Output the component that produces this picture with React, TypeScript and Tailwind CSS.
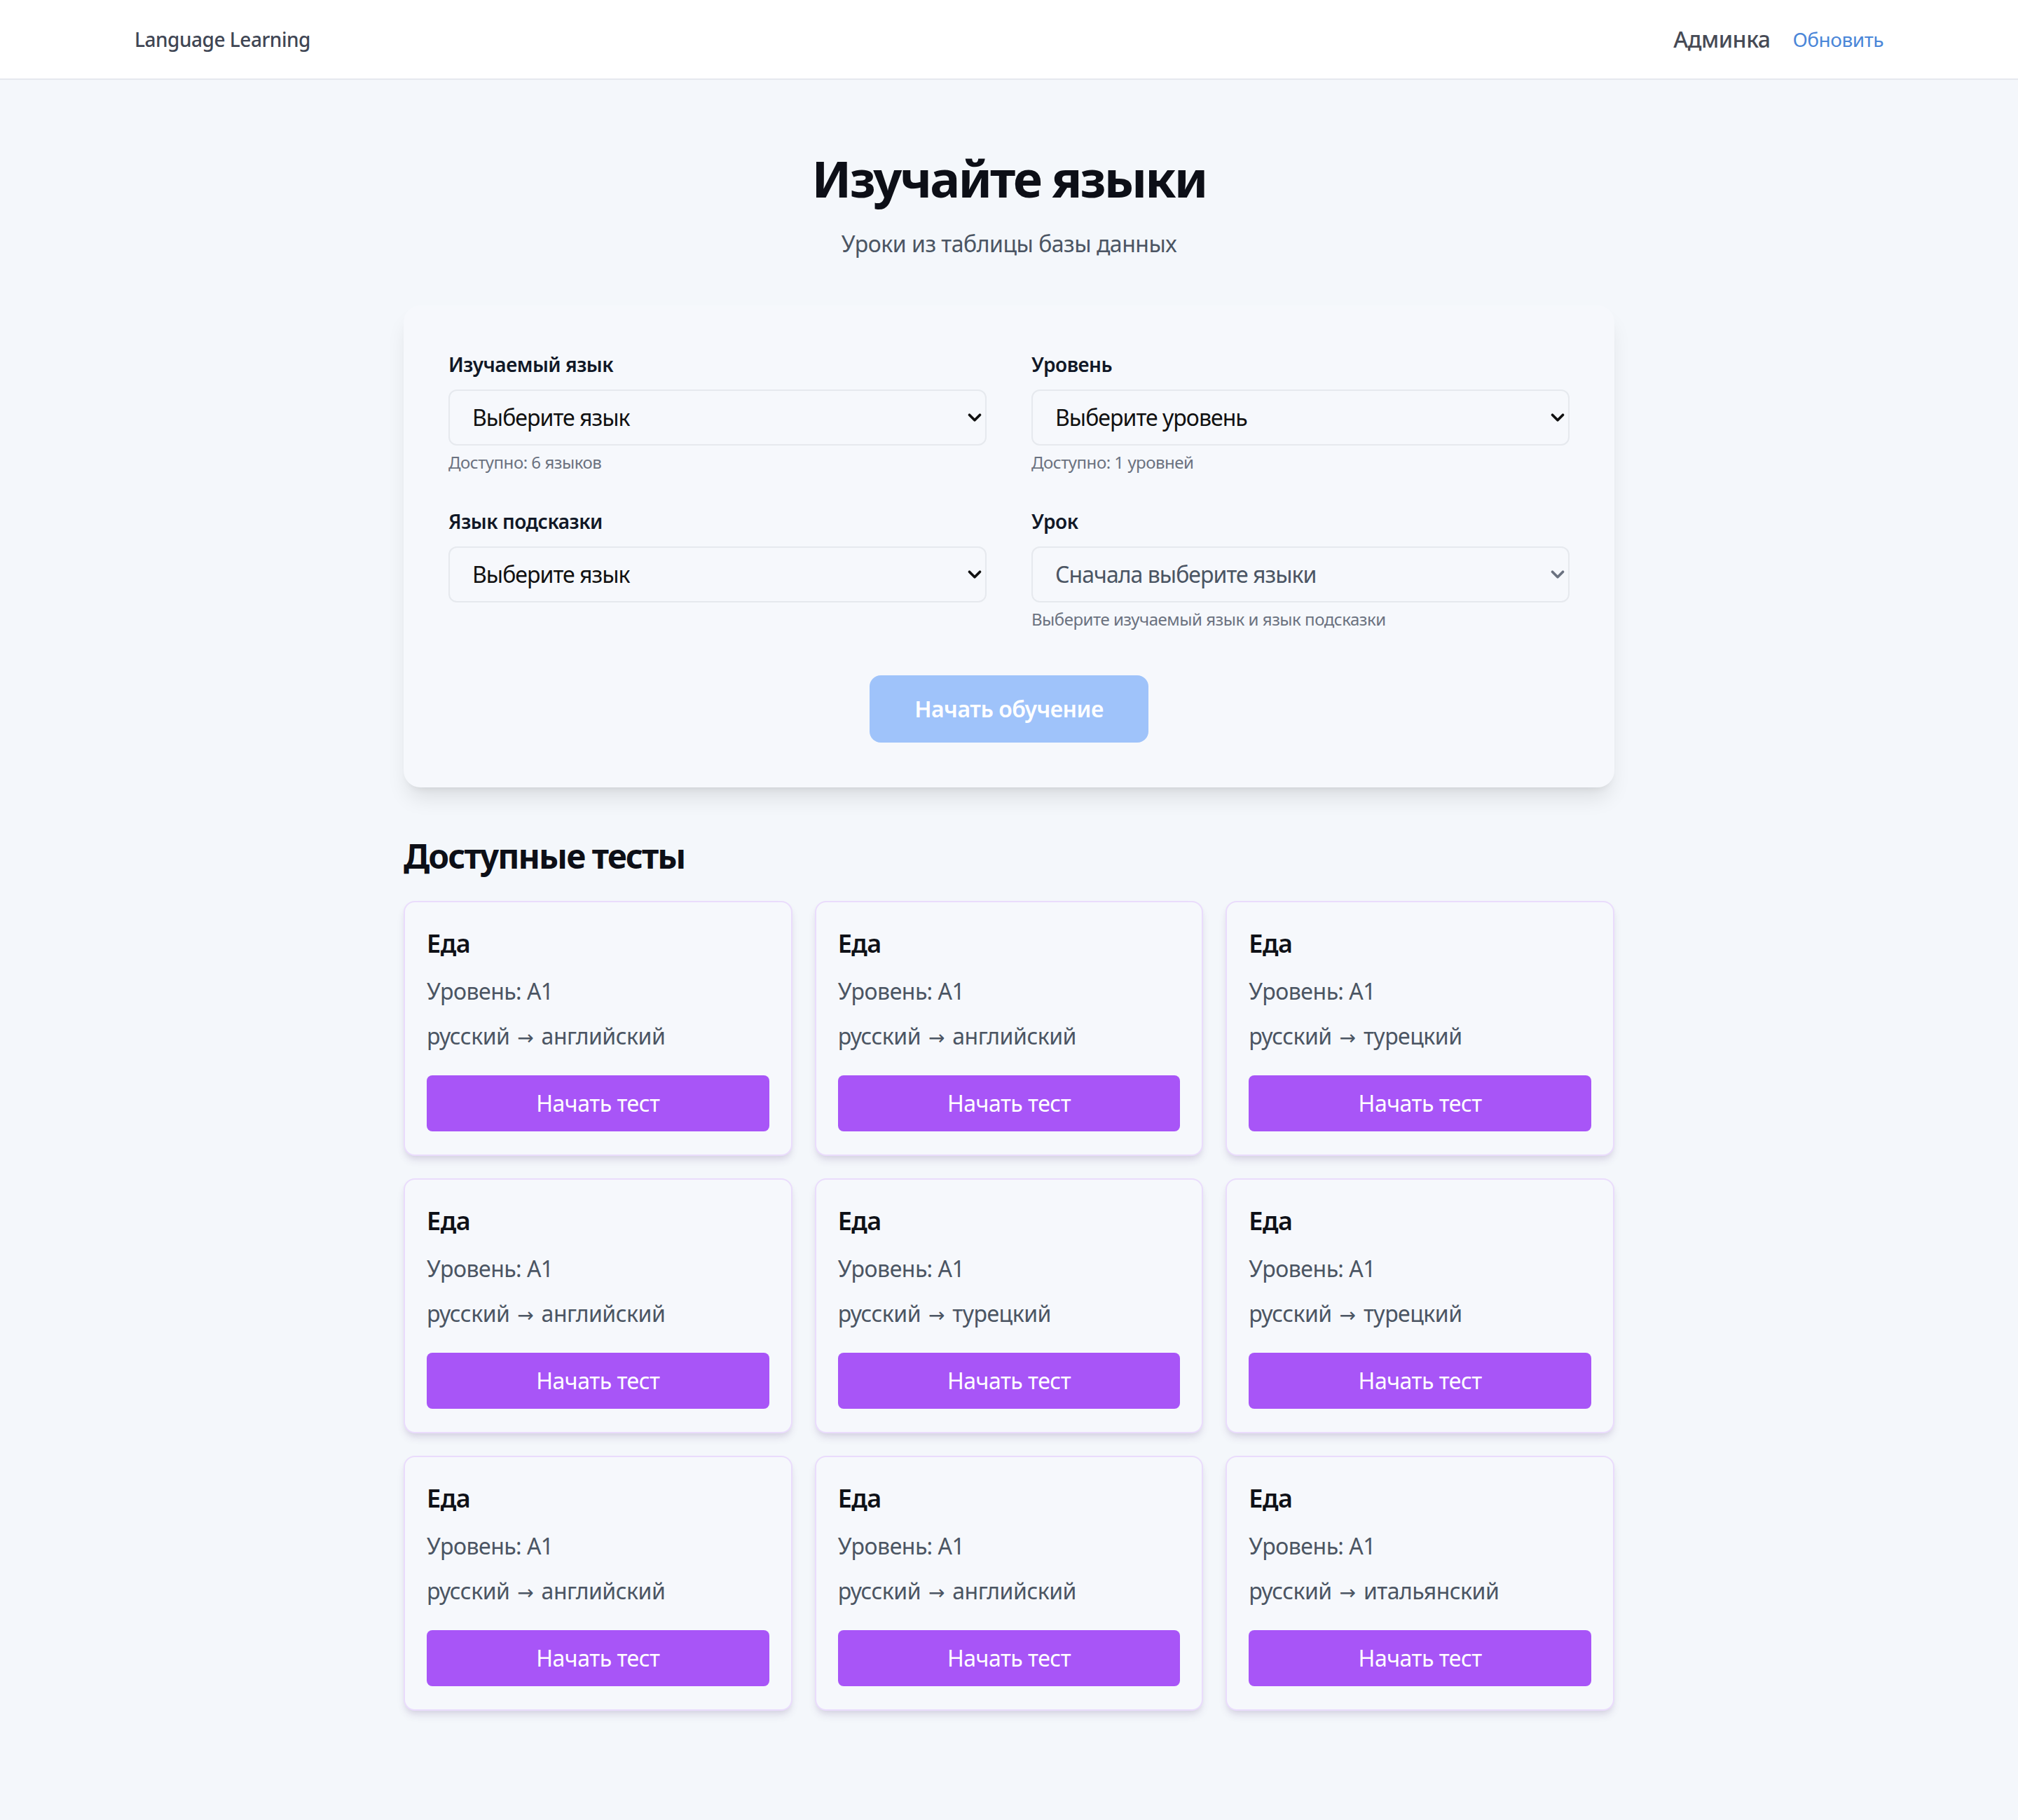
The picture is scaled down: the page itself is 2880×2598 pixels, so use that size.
import { ChevronDown } from 'lucide-react';

interface Test {
  id: number;
  title: string;
  level: string;
  from: string;
  to: string;
}

const tests: Test[] = [
  { id: 1, title: 'Еда', level: 'A1', from: 'русский', to: 'английский' },
  { id: 2, title: 'Еда', level: 'A1', from: 'русский', to: 'английский' },
  { id: 3, title: 'Еда', level: 'A1', from: 'русский', to: 'турецкий' },
  { id: 4, title: 'Еда', level: 'A1', from: 'русский', to: 'английский' },
  { id: 5, title: 'Еда', level: 'A1', from: 'русский', to: 'турецкий' },
  { id: 6, title: 'Еда', level: 'A1', from: 'русский', to: 'турецкий' },
  { id: 7, title: 'Еда', level: 'A1', from: 'русский', to: 'английский' },
  { id: 8, title: 'Еда', level: 'A1', from: 'русский', to: 'английский' },
  { id: 9, title: 'Еда', level: 'A1', from: 'русский', to: 'итальянский' },
];

interface SelectFieldProps {
  label: string;
  placeholder: string;
  hint?: string;
  disabled?: boolean;
}

function SelectField({ label, placeholder, hint, disabled = false }: SelectFieldProps) {
  return (
    <div className="flex flex-col">
      <label className="mb-[16px] text-[28px] leading-[40px] font-semibold text-[#111827]">{label}</label>
      <div className="relative">
        <select
          disabled={disabled}
          className={`w-full appearance-none rounded-[12px] border-2 border-[#e6e9ee] bg-transparent py-[14px] pl-[32px] pr-[64px] text-[32px] leading-[48px] tracking-[-0.03em] outline-none ${
            disabled ? 'text-[#4b5563]' : 'text-[#111111]'
          }`}
        >
          <option>{placeholder}</option>
        </select>
        {/* стрелка селекта */}
        <ChevronDown
          className={`pointer-events-none absolute right-[2px] top-1/2 h-[30px] w-[30px] -translate-y-1/2 ${
            disabled ? 'text-[#6b7280]' : 'text-[#111111]'
          }`}
          strokeWidth={3}
        />
      </div>
      {hint && <p className="mt-[8px] text-[24px] leading-[32px] text-[#6b7280]">{hint}</p>}
    </div>
  );
}

function TestCard({ test }: { test: Test }) {
  return (
    <div className="rounded-[16px] border-2 border-[#eadcfc] bg-[#f6f8fc] px-[31px] pt-[31px] pb-[33px] shadow-[0_8px_12px_-2px_rgba(70,40,110,0.13),0_4px_8px_-4px_rgba(70,40,110,0.1)]">
      <h3 className="mb-[16px] text-[36px] leading-[56px] font-semibold text-[#0f1117]">{test.title}</h3>
      <p className="mb-[16px] text-[32px] leading-[48px] text-[#4b5563]">Уровень: {test.level}</p>
      <p className="text-[32px] leading-[48px] text-[#4b5563]">
        {test.from}{' '}
        <span className="mx-[3px] font-['DejaVu_Sans',sans-serif] text-[28px] leading-none tracking-normal">→</span>{' '}
        {test.to}
      </p>
      <button className="mt-[32px] w-full rounded-[8px] bg-[#a855f7] py-[16px] text-[32px] leading-[48px] text-white">
        Начать тест
      </button>
    </div>
  );
}

export default function App() {
  return (
    <div className="min-h-screen bg-[#f4f7fb] font-['Noto_Sans','Open_Sans',sans-serif] tracking-[-0.03em]">
      {/* Шапка */}
      <header className="border-b-2 border-[#e5e8ee] bg-white">
        <div className="mx-auto flex h-[112px] max-w-[2560px] items-center justify-between px-[32px]">
          <span className="text-[28px] font-medium text-[#404654]">Language Learning</span>
          <nav className="flex items-center gap-[32px]">
            <span className="text-[32px] font-medium text-[#464a55]">Админка</span>
            <button className="text-[28px] text-[#4a86d8]">Обновить</button>
          </nav>
        </div>
      </header>

      <main className="mx-auto max-w-[1792px] px-[32px] pt-[100px] pb-[160px]">
        <h1 className="text-center text-[72px] leading-[80px] font-bold tracking-[-0.04em] text-[#0d0f17]">
          Изучайте языки
        </h1>
        <p className="mt-[30px] text-center text-[32px] leading-[48px] text-[#4b5563]">Уроки из таблицы базы данных</p>

        {/* Форма выбора */}
        <div className="mt-[64px] rounded-[24px] bg-[#f6f8fc] p-[64px] shadow-[0_20px_30px_-6px_rgba(0,0,0,0.1),0_8px_12px_-8px_rgba(0,0,0,0.1)]">
          <div className="grid grid-cols-2 gap-x-[64px] gap-y-[48px]">
            <SelectField label="Изучаемый язык" placeholder="Выберите язык" hint="Доступно: 6 языков" />
            <SelectField label="Уровень" placeholder="Выберите уровень" hint="Доступно: 1 уровней" />
            <SelectField label="Язык подсказки" placeholder="Выберите язык" />
            <SelectField
              label="Урок"
              placeholder="Сначала выберите языки"
              hint="Выберите изучаемый язык и язык подсказки"
              disabled
            />
          </div>
          <div className="mt-[64px] flex justify-center">
            <button
              disabled
              className="rounded-[16px] bg-[#9fc3fa] px-[64px] py-[24px] text-[32px] leading-[48px] font-semibold text-white"
            >
              Начать обучение
            </button>
          </div>
        </div>

        {/* Список тестов */}
        <section className="mt-[66px]">
          <h2 className="mb-[32px] text-[48px] leading-[64px] font-bold tracking-[-0.04em] text-[#0d0f17]">
            Доступные тесты
          </h2>
          <div className="grid grid-cols-3 gap-[32px]">
            {tests.map(test => (
              <TestCard key={test.id} test={test} />
            ))}
          </div>
        </section>
      </main>
    </div>
  );
}
